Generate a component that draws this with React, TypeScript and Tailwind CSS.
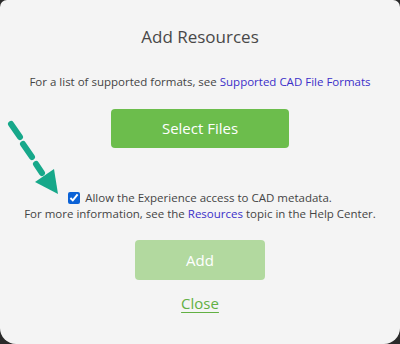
import React from 'react';

function PointerArrow() {
  return (
    <svg className="absolute left-0 top-[112px]" width="70" height="90" viewBox="0 0 70 90">
      <g stroke="#17a88a" strokeWidth="6" strokeLinecap="round" fill="none">
        <line x1="11" y1="12" x2="20" y2="25" />
        <line x1="23" y1="32" x2="32" y2="45" />
        <line x1="36" y1="52" x2="42" y2="61" />
      </g>
      <polygon points="35,70 54,57 58,82" fill="#17a88a" />
    </svg>
  );
}

export default function App() {
  return (
    <div className="w-[400px] h-[344px] bg-[#2a2a2a] overflow-hidden">
      <div
        className="relative w-full h-full bg-[#f4f4f4] rounded-t-[7px] rounded-b-[16px] flex flex-col items-center text-[#444444]"
        style={{ fontFamily: '"Open Sans", "Noto Sans", sans-serif' }}
      >
        <PointerArrow />
        <h2 className="mt-[23px] text-[17px] leading-[28px] text-[#484848]">Add Resources</h2>

        <p className="mt-[22px] text-[11.5px] leading-[18px]">
          For a list of supported formats, see{' '}
          <a className="text-[#3b2fc9]">Supported CAD File Formats</a>
        </p>

        <button className="mt-[18px] w-[178px] h-[39px] rounded-[4px] bg-[#6cbd4c] text-white text-[15px]">
          Select Files
        </button>

        <div className="mt-[42px] flex flex-col items-center text-[11.5px] leading-[16px]">
          <label className="flex items-center gap-[5px]">
            <input type="checkbox" defaultChecked className="w-[12px] h-[12px] accent-[#0b62d6]" />
            <span>Allow the Experience access to CAD metadata.</span>
          </label>
          <p>
            For more information, see the <a className="text-[#3b2fc9]">Resources</a> topic in the Help Center.
          </p>
        </div>

        <button className="mt-[18px] w-[130px] h-[40px] rounded-[4px] bg-[#b2d99f] text-white text-[15px]">
          Add
        </button>

        <a className="mt-[12px] text-[15px] leading-[22px] text-[#62b043] underline underline-offset-[3px]">Close</a>
      </div>
    </div>
  );
}
